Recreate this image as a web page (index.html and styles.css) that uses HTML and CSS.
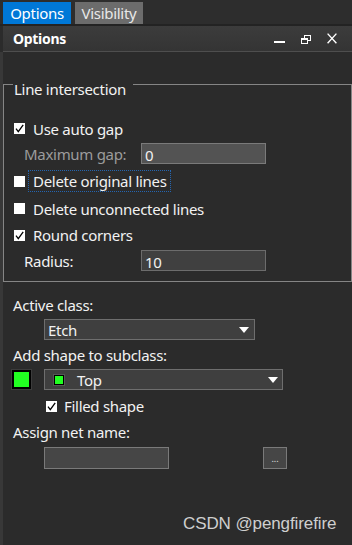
FILE: index.html
```html
<!DOCTYPE html>
<html>
<head>
<meta charset="utf-8">
<link rel="stylesheet" href="styles.css">
</head>
<body>
<div class="tabs">
  <div class="tab tab-active">Options</div>
  <div class="tab">Visibility</div>
</div>
<div class="tab-line"></div>
<div class="header">
  <span class="header-title">Options</span>
  <div class="win-btns">
    <svg class="ico" width="11" height="11" viewBox="0 0 11 11"><rect x="0" y="8" width="11" height="2" fill="#ffffff"/></svg>
    <svg class="ico" width="10" height="11" viewBox="0 0 10 11"><rect x="3.5" y="2.5" width="6" height="5" fill="none" stroke="#ffffff"/><rect x="0.5" y="5.5" width="6" height="5" fill="#383838" stroke="#ffffff"/><rect x="0" y="5" width="7" height="2" fill="#ffffff"/></svg>
    <svg class="ico" width="10" height="11" viewBox="0 0 10 11"><path d="M0.6 0.6 L9.4 10.2 M9.4 0.6 L0.6 10.2" stroke="#ffffff" stroke-width="1.4" fill="none"/></svg>
  </div>
</div>
<div class="content">
  <div class="group">
    <div class="gb-head"><span class="gb-title">Line intersection</span></div>
    <div class="row row-1"><span class="cb cb-checked"><svg width="11" height="11" viewBox="0 0 11 11"><path d="M2 5.6 L4.3 8.6 L9.2 1.8" stroke="#000" stroke-width="1.3" fill="none"/></svg></span><span>Use auto gap</span></div>
    <div class="row row-2"><span class="lbl lbl-dis">Maximum gap:</span><div class="field field-dis">0</div></div>
    <div class="row row-3"><span class="cb"></span><span class="focus">Delete original lines</span></div>
    <div class="row row-4"><span class="cb"></span><span>Delete unconnected lines</span></div>
    <div class="row row-5"><span class="cb cb-checked"><svg width="11" height="11" viewBox="0 0 11 11"><path d="M2 5.6 L4.3 8.6 L9.2 1.8" stroke="#000" stroke-width="1.3" fill="none"/></svg></span><span>Round corners</span></div>
    <div class="row row-6"><span class="lbl">Radius:</span><div class="field">10</div></div>
  </div>

  <div class="text-row tr-active">Active class:</div>
  <div class="combo combo-etch"><span>Etch</span><span class="tri"></span></div>
  <div class="text-row tr-add">Add shape to subclass:</div>
  <div class="shape-row">
    <div class="swatch"></div>
    <div class="combo combo-top"><span class="mini-swatch"></span><span class="combo-text">Top</span><span class="tri"></span></div>
  </div>
  <div class="filled-row"><span class="cb cb-checked cb-small"><svg width="11" height="11" viewBox="0 0 11 11"><path d="M2 5.6 L4.3 8.6 L9.2 1.8" stroke="#000" stroke-width="1.3" fill="none"/></svg></span><span>Filled shape</span></div>
  <div class="text-row tr-net">Assign net name:</div>
  <div class="net-row">
    <div class="net-field"></div>
    <div class="dots-btn">...</div>
  </div>
</div>
<div class="watermark">CSDN @pengfirefire</div>
</body>
</html>
```
FILE: styles.css
```css
html, body {
  margin: 0;
  padding: 0;
}
body {
  width: 352px;
  height: 545px;
  background: #2b2b2b;
  font-family: "Noto Sans", "Open Sans", sans-serif;
  font-size: 15px;
  letter-spacing: -0.3px;
  color: #f2f2f2;
  position: relative;
  overflow: hidden;
}
.tabs {
  display: flex;
  gap: 4px;
  height: 22px;
  padding: 2px 0 0 3px;
  background: #2d2d2d;
}
.tab {
  width: 68px;
  height: 22px;
  line-height: 22px;
  text-align: center;
  color: #e8e8e8;
  background: #6c6c6c;
}
.tab-active {
  background: #0078d7;
  color: #ffffff;
}
.tab-line {
  height: 2px;
  background: #232323;
}
.header {
  display: flex;
  align-items: center;
  height: 25px;
  margin-left: 3px;
  padding-left: 10px;
  background: linear-gradient(#3c3c3c, #343434);
  border-bottom: 1px solid #4e4e4e;
}
.header-title {
  font-weight: bold;
  font-size: 14px;
  line-height: 25px;
  color: #ffffff;
}
.win-btns {
  margin-left: auto;
  display: flex;
  align-items: center;
  gap: 16px;
  padding-right: 15px;
}
.ico {
  display: block;
}
.content {
  border-left: 3px solid #383838;
  height: 493px;
  padding-top: 32px;
  box-sizing: border-box;
}
.group {
  border: 1px solid #858585;
  border-top: none;
  padding-bottom: 8px;
}
.gb-head {
  display: flex;
  align-items: flex-start;
  height: 10px;
  margin-bottom: 21px;
}
.gb-head::before {
  content: "";
  width: 9px;
  border-top: 1px solid #858585;
}
.gb-head::after {
  content: "";
  flex: 1;
  border-top: 1px solid #858585;
}
.gb-title {
  line-height: 10px;
  padding: 0 7px 0 1px;
}
.row {
  display: flex;
  align-items: center;
  padding-left: 10px;
  line-height: 20px;
}
.row-1 { height: 27px; }
.row-2 { height: 25px; padding-left: 20px; align-items: flex-start; }
.row-3 { height: 28px; }
.row-4 { height: 27px; }
.row-5 { height: 26px; }
.row-6 { height: 25px; padding-left: 20px; }
.row-2 .lbl { line-height: 25px; }
.cb {
  width: 11px;
  height: 11px;
  background: #ffffff;
  margin-right: 8px;
  flex: none;
}
.cb svg {
  display: block;
}
.lbl {
  width: 117px;
  flex: none;
}
.lbl-dis {
  color: #9c9c9c;
}
.field {
  box-sizing: border-box;
  width: 125px;
  height: 21px;
  line-height: 22px;
  padding-left: 3px;
  background: #404040;
  border: 1px solid #6c6c6c;
}
.field-dis {
  margin-top: 1px;
  background: #535353;
  border-color: #7a7a7a;
}
.focus {
  margin-left: -5px;
  padding: 0 3px 0 4px;
  border: 1px dotted #2465b0;
}
.text-row {
  line-height: 20px;
  padding-left: 10px;
}
.tr-active { margin-top: 13px; }
.tr-add { margin-top: 5px; }
.tr-net { margin-top: 6px; }
.combo {
  box-sizing: border-box;
  display: flex;
  align-items: center;
  height: 21px;
  line-height: 22px;
  background: #3f3f3f;
  border: 1px solid #6e6e6e;
}
.combo-etch {
  margin: 4px 0 0 41px;
  width: 211px;
  padding-left: 3px;
}
.tri {
  margin-left: auto;
  width: 0;
  height: 0;
  border-left: 5px solid transparent;
  border-right: 5px solid transparent;
  border-top: 6px solid #ffffff;
}
.combo-etch .tri { margin-right: 5px; }
.shape-row {
  display: flex;
  align-items: center;
  margin-top: 4px;
  padding-left: 9px;
}
.swatch {
  box-sizing: border-box;
  width: 19px;
  height: 19px;
  background: #22ff22;
  border: 2px solid #000000;
  outline: 1px solid #3c3c3c;
}
.combo-top {
  margin-left: 13px;
  width: 239px;
  padding-left: 9px;
}
.mini-swatch {
  box-sizing: border-box;
  width: 10px;
  height: 10px;
  background: #22ff22;
  border: 1px solid #000000;
  outline: 1px solid #555;
}
.combo-text {
  margin-left: 13px;
}
.combo-top .tri { margin-right: 4px; }
.filled-row {
  display: flex;
  align-items: center;
  margin-top: 6px;
  padding-left: 43px;
  line-height: 20px;
}
.filled-row .cb {
  margin-right: 7px;
}
.net-row {
  display: flex;
  margin-top: 5px;
  padding-left: 41px;
}
.net-field {
  box-sizing: border-box;
  width: 125px;
  height: 22px;
  background: #464646;
  border: 1px solid #7a7a7a;
}
.dots-btn {
  box-sizing: border-box;
  width: 24px;
  height: 22px;
  margin-left: 94px;
  background: #464646;
  border: 1px solid #7a7a7a;
  font-size: 9px;
  letter-spacing: 0;
  line-height: 9px;
  display: flex;
  justify-content: center;
  align-items: flex-end;
  padding-bottom: 5px;
  color: #e0e0e0;
}
.watermark {
  position: absolute;
  left: 183px;
  top: 514px;
  font-family: "Liberation Sans", Arial, sans-serif;
  font-size: 17px;
  letter-spacing: -0.1px;
  line-height: 20px;
  color: #cfcfcf;
}
```
